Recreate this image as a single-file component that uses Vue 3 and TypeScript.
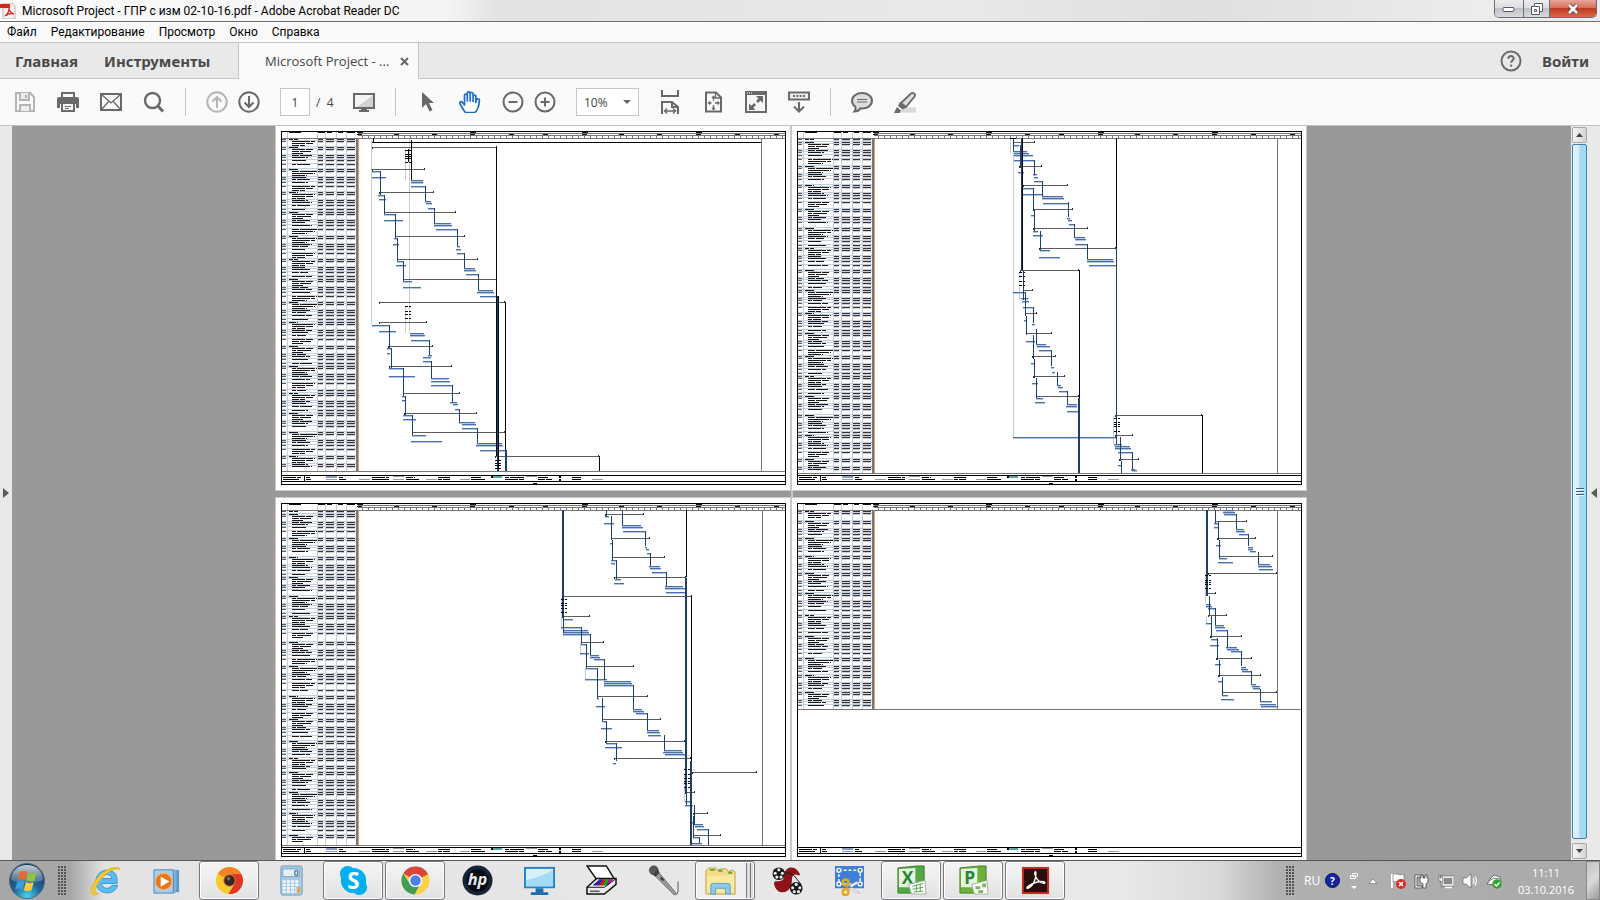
<script setup lang="ts">
import { ref } from 'vue'

type Span = [number, number, number]
type Link = [number, number, number, string?]
interface SheetData {
  scale: number
  left: number
  top: number
  end: number
  summaries: Span[]
  tasks: Span[]
  links: Link[]
  stones: [number, number[]][]
}
interface Layer { color: string; d: string }

const pageNo = ref('1')
const zoomLevel = ref('10%')
const menus = ['Файл', 'Редактирование', 'Просмотр', 'Окно', 'Справка']

// Chart geometry in drawing units: [x1, x2, y] for bars, [x, y1, y2, kind] for links.
const sheets: SheetData[] = [
  {
    scale: 3, left: -6, top: -6, end: 1053,
    summaries: [[305, 680, 81], [305, 465, 147], [328, 492, 218], [343, 558, 276], [374, 584, 348], [380, 623, 418], [400, 680, 478], [328, 706, 548], [327, 470, 608], [353, 488, 679], [358, 545, 738], [398, 570, 821], [403, 622, 880], [426, 706, 938], [675, 988, 1009]],
    tasks: [[305, 331, 153], [305, 348, 173], [424, 458, 180], [424, 460, 186], [424, 466, 199], [325, 343, 225], [326, 348, 237], [466, 484, 245], [468, 487, 251], [474, 491, 264], [343, 376, 284], [343, 400, 302], [491, 544, 310], [491, 545, 316], [499, 560, 328], [372, 381, 354], [370, 386, 374], [560, 569, 380], [558, 572, 387], [560, 583, 400], [380, 400, 425], [379, 407, 437], [583, 614, 445], [583, 617, 451], [587, 623, 464], [400, 427, 484], [398, 452, 503], [623, 669, 510], [620, 673, 516], [631, 683, 529], [305, 358, 616], [326, 378, 635], [421, 462, 640], [421, 465, 646], [424, 476, 661], [352, 362, 686], [352, 360, 700], [474, 487, 706], [460, 482, 712], [460, 484, 725], [358, 400, 746], [356, 434, 770], [484, 536, 776], [482, 539, 783], [484, 545, 796], [397, 405, 829], [397, 405, 840], [541, 562, 848], [548, 564, 854], [554, 568, 867], [400, 427, 886], [400, 437, 899], [568, 614, 906], [575, 617, 912], [577, 622, 926], [427, 468, 945], [424, 516, 965], [620, 697, 970], [618, 699, 976], [631, 706, 990]],
    links: [[304, 60, 615, 'l'], [418, 60, 640, 'l'], [406, 90, 180, 'l'], [406, 560, 640, 'l'], [1474, 54, 1053, 'g'], [310, 54, 66, 'k'], [331, 153, 225], [343, 225, 284], [376, 284, 354], [382, 354, 425], [400, 425, 484], [424, 60, 180, 'k'], [415, 88, 128, 'k'], [466, 199, 245], [491, 264, 310], [560, 328, 380], [583, 400, 445], [623, 464, 510], [683, 529, 1053, 'w'], [679, 81, 1009, 'k'], [706, 548, 990, 'k'], [358, 616, 686], [362, 686, 746], [400, 746, 829], [406, 829, 886], [427, 886, 945], [476, 661, 706], [484, 725, 776], [545, 796, 848], [568, 867, 906], [622, 926, 970], [709, 990, 1053, 'n'], [988, 1009, 1053, 'k']],
    stones: [[406, [90, 103, 109, 115, 127, 558, 573, 582, 594]], [674, [1021, 1030, 1036, 1045]]],
  },
  {
    scale: 2.958, left: -2, top: -6, end: 1059,
    summaries: [[661, 724, 67], [676, 745, 138], [688, 821, 197], [718, 836, 267], [720, 881, 326], [738, 963, 385], [680, 856, 450], [688, 719, 510], [694, 730, 580], [698, 774, 639], [717, 786, 710], [720, 812, 769], [728, 856, 828], [960, 1220, 886], [960, 1014, 946], [974, 1032, 1017]],
    tasks: [[661, 678, 75], [661, 700, 93], [664, 707, 100], [662, 719, 106], [664, 723, 120], [674, 691, 157], [720, 731, 164], [722, 733, 171], [723, 744, 184], [688, 720, 204], [686, 744, 222], [744, 808, 230], [744, 810, 236], [747, 821, 249], [714, 725, 287], [820, 829, 294], [822, 833, 301], [824, 841, 314], [720, 733, 333], [718, 747, 346], [841, 873, 352], [843, 876, 358], [844, 880, 373], [739, 769, 392], [737, 799, 411], [880, 955, 417], [878, 957, 424], [884, 963, 437], [661, 696, 517], [684, 703, 536], [686, 706, 545], [690, 720, 562], [691, 700, 600], [716, 726, 612], [697, 725, 665], [729, 758, 673], [730, 769, 679], [738, 773, 691], [714, 724, 730], [772, 781, 743], [775, 784, 756], [717, 733, 789], [791, 802, 796], [793, 808, 802], [795, 818, 815], [728, 747, 834], [726, 754, 848], [818, 848, 853], [816, 850, 859], [820, 856, 873], [661, 963, 952], [957, 983, 972], [960, 1005, 979], [962, 1008, 986], [970, 1013, 998], [971, 979, 1037], [1010, 1020, 1047], [1012, 1026, 1051]],
    links: [[661, 95, 952, 'l'], [650, 54, 100, 'l'], [676, 458, 540, 'l'], [956, 890, 972, 'l'], [1442, 54, 1059, 'g'], [661, 54, 95], [686, 54, 450, 'w'], [963, 54, 385, 'k'], [963, 385, 972], [856, 450, 835, 'k'], [855, 835, 1059, 'n'], [1220, 886, 1059, 'k'], [679, 75, 145], [723, 120, 165], [720, 205, 272], [744, 185, 230], [821, 248, 293], [841, 314, 352], [880, 373, 417], [723, 272, 333], [739, 333, 392], [688, 450, 540], [696, 517, 590], [720, 563, 610], [699, 590, 645], [729, 628, 672], [720, 645, 718], [773, 692, 740], [723, 718, 775], [791, 757, 795], [729, 775, 835], [818, 815, 853], [976, 953, 1025], [1013, 998, 1048], [980, 1025, 1059]],
    stones: [[676, [458, 470, 483, 496]], [957, [895, 907, 913, 919, 934]], [650, [55]]],
  },
  {
    scale: 2.958, left: -6, top: -8, end: 1066,
    summaries: [[990, 1106, 73], [1008, 1125, 144], [1013, 1168, 203], [1018, 1232, 261], [868, 1247, 320], [868, 948, 380], [920, 988, 457], [935, 1076, 528], [967, 1117, 618], [982, 1158, 688], [992, 1229, 753], [1019, 1246, 806], [1247, 1441, 846], [1229, 1256, 906], [1250, 1297, 970], [1250, 1333, 1035]],
    tasks: [[990, 1002, 80], [987, 1017, 99], [1042, 1098, 105], [1040, 1102, 112], [1045, 1110, 125], [1005, 1013, 160], [1110, 1116, 172], [1112, 1120, 178], [1115, 1125, 190], [1010, 1022, 210], [1010, 1020, 221], [1120, 1153, 230], [1125, 1156, 236], [1130, 1170, 248], [1020, 1038, 268], [1017, 1046, 281], [1168, 1222, 289], [1167, 1228, 295], [1172, 1232, 308], [868, 895, 387], [862, 921, 412], [866, 940, 420], [866, 944, 426], [868, 948, 432], [921, 936, 464], [918, 943, 489], [946, 972, 496], [946, 976, 502], [957, 989, 509], [936, 968, 535], [933, 998, 567], [987, 1068, 573], [987, 1071, 580], [989, 1076, 587], [966, 974, 625], [965, 990, 650], [1075, 1101, 657], [1075, 1105, 664], [1084, 1116, 670], [982, 995, 695], [980, 1013, 714], [1116, 1150, 722], [1114, 1154, 728], [1118, 1156, 735], [994, 1022, 760], [990, 1042, 773], [1164, 1219, 780], [1162, 1221, 787], [1167, 1229, 793], [1016, 1024, 819], [1227, 1245, 935], [1229, 1250, 945], [1242, 1256, 997], [1255, 1281, 1004], [1256, 1285, 1010], [1264, 1297, 1018], [1252, 1271, 1043], [1247, 1278, 1061]],
    links: [[860, 325, 412, 'l'], [918, 463, 489, 'l'], [933, 535, 567, 'l'], [1226, 853, 935, 'l'], [1454, 60, 1066, 'g'], [867, 60, 385, 'n'], [993, 60, 80], [1010, 80, 150], [1042, 60, 105], [1110, 125, 170], [1013, 150, 210], [1125, 190, 230], [1022, 210, 268], [1170, 248, 288], [1232, 60, 262, 'k'], [1230, 266, 910, 'n'], [1246, 320, 815, 'k'], [1245, 815, 1066, 'n'], [868, 385, 430], [921, 412, 463], [948, 432, 496], [936, 463, 535], [989, 509, 572], [968, 535, 625], [1075, 586, 657], [983, 625, 695], [1116, 670, 722], [995, 695, 760], [1164, 736, 780], [1022, 760, 815], [1232, 880, 945], [1255, 945, 1005], [1252, 980, 1045], [1297, 1018, 1066], [1270, 1042, 1060]],
    stones: [[862, [328, 340, 346, 355, 367]], [1225, [838, 853, 865, 873, 880, 892]]],
  },
  {
    scale: 2.958, left: -2, top: -8, end: 658,
    summaries: [[1258, 1351, 93], [1264, 1379, 146], [1268, 1429, 198], [1235, 1442, 249], [1234, 1259, 310], [1236, 1292, 375], [1242, 1336, 440], [1260, 1366, 505], [1267, 1392, 556], [1278, 1442, 608]],
    tasks: [[1282, 1314, 61], [1280, 1316, 67], [1285, 1320, 73], [1255, 1267, 100], [1255, 1266, 112], [1320, 1343, 119], [1320, 1346, 125], [1328, 1356, 132], [1261, 1274, 165], [1356, 1369, 172], [1356, 1371, 178], [1360, 1378, 185], [1270, 1293, 204], [1266, 1310, 217], [1383, 1420, 223], [1383, 1425, 230], [1386, 1428, 237], [1230, 1244, 343], [1232, 1247, 349], [1236, 1258, 355], [1232, 1246, 401], [1258, 1284, 407], [1258, 1288, 413], [1260, 1294, 420], [1244, 1264, 447], [1241, 1270, 465], [1290, 1321, 472], [1292, 1327, 478], [1304, 1335, 485], [1258, 1274, 523], [1335, 1350, 531], [1335, 1356, 537], [1338, 1365, 543], [1265, 1282, 575], [1365, 1377, 583], [1367, 1389, 589], [1370, 1391, 596], [1279, 1296, 615], [1276, 1314, 629], [1391, 1427, 635], [1391, 1437, 642], [1393, 1442, 649]],
    links: [[1228, 257, 340, 'l'], [1231, 380, 401, 'l'], [1442, 60, 658, 'g'], [1234, 60, 318, 'n'], [1258, 60, 98], [1267, 98, 150], [1320, 73, 118], [1270, 150, 205], [1356, 132, 170], [1383, 186, 223], [1238, 318, 375], [1258, 355, 406], [1244, 380, 446], [1294, 420, 472], [1264, 446, 510], [1335, 485, 530], [1270, 510, 563], [1365, 543, 582], [1279, 563, 615], [1391, 597, 635]],
    stones: [[1228, [257, 270, 277, 284, 296]]],
  },
]

function box(x: number, y: number, w: number, h: number): string {
  return `M${x} ${y}h${w}v${h}h${-w}z`
}

// Body text at this zoom is only a run of short dashes.
function words(x: number, y: number, w: number, seed: number): string {
  let d = ''
  let at = x
  let k = seed
  while (at < x + w) {
    const len = Math.min(4 + (k * 7) % 6, x + w - at)
    d += box(at, y, len, 1)
    at += len + (k % 3 === 0 ? 1 : 0)
    k++
  }
  return d
}

function build(s: SheetData): Layer[] {
  const px = (v: number) => Math.round(v / s.scale + s.left)
  const py = (v: number) => Math.floor(v / 3 + s.top)
  const end = py(s.end)
  const start = 13
  let rules = '', ink = '', cells = '', soft = '', numbers = '', head = ''

  const row = (y: number, lines: number, indent: number, seed: number) => {
    if (y >= end) return
    rules += box(6, y - 1, 74, 1)
    numbers += box(6, y, 4, 1)
    for (let i = 0; i < lines && y + i * 2 < end; i++) {
      const w = lines === 1 ? 14 + (seed % 4) * 2 : [25, 23, 15][i % 3] - (seed % 3) * 2
      ink += words(indent, y + i * 2, indent < 15 ? Math.min(w, 9) : w, seed + i)
    }
    cells += box(42, y, 5, 1) + box(50, y, 8, 1) + box(61, y, 7, 1) + box(71, y, 8, 1)
    soft += box(42, y + 1, 5, 1) + box(50, y + 1, 8, 1) + box(61, y + 1, 7, 1) + box(71, y + 1, 8, 1)
  }
  const marks = [start, ...s.summaries.map((v) => py(v[2])), end]
  marks.forEach((y, i) => {
    if (i === marks.length - 1) return
    const gap = marks[i + 1] - y
    row(y, 1, 13, i)
    if (gap > 6) row(y + 2, 3, 16, i + 1)
    if (gap > 10) row(y + 8, 1, 16, i + 2)
    if (gap > 15) row(y + 13, 1, 16, i + 3)
    if (gap > 12) row(y + 10, 1, 16, i + 4)
    if (gap > 19) row(y + 17, gap > 22 ? 3 : 1, 16, i + 5)
    if (gap > 26) row(y + 24, 1, 16, i + 1)
  })

  for (const x of [11, 41, 49, 60, 70]) rules += box(x, 6, 1, end - 6)
  let grey = box(82, 7, 427, 1) + box(82, 9, 427, 1) + box(6, 12, 503, 1) + box(6, end, 503, 1) + box(80, 13, 2, end - 13)
  for (let x = 86; x < 509; x += 6) grey += box(x, 10, 1, 2)
  head += words(13, 6, 12, 2) + box(42, 6, 7, 1) + box(51, 6, 5, 1) + box(62, 6, 5, 1) + box(71, 6, 8, 1)
  const labels = [81, 118, 156, 194, 233, 267, 306, 343, 381, 420, 459, 498]
  labels.forEach((x, i) => { head += box(x, 8, 5, 1) + (i % 3 === 0 ? box(x, 6, 6, 1) : '') })

  let bars = '', barEdge = '', sums = '', sumEdge = '', light = '', navy = '', black = ''
  for (const [a, b, y] of s.tasks) {
    bars += box(px(a), py(y), Math.max(px(b) - px(a), 2), 1)
    barEdge += box(px(a), py(y) + 1, Math.max(px(b) - px(a), 2), 1)
  }
  for (const [a, b, y] of s.summaries) {
    sums += box(px(a), py(y), px(b) - px(a), 1)
    sumEdge += box(px(b) - 1, py(y) - 1, 1, 2) + box(px(a), py(y), 1, 2)
  }
  for (const [x, a, b, kind] of s.links) {
    const top = py(a)
    const h = py(b) - top
    if (kind === 'l') light += box(px(x), top, 1, h)
    else if (kind === 'g') grey += box(px(x), top, 1, h)
    else if (kind === 'k') black += box(px(x), top, 1, h)
    else if (kind === 'w') { black += box(px(x), top, 1, h); navy += box(px(x) - 1, top, 1, h) }
    else if (kind === 'n') navy += box(px(x) - 1, top, 2, h)
    else navy += box(px(x), top, 1, h)
  }
  for (const [x, ys] of s.stones) for (const y of ys) black += box(px(x), py(y), 3, 1) + box(px(x) + 4, py(y), 2, 1)
  if (s === sheets[0]) black += box(px(305), py(67), px(1474) - px(305), 1)

  // Legend under the chart and the outer frame.
  const foot = 349
  let legend = box(6, foot, 503, 1) + box(6, foot + 6, 503, 1) + box(28, foot, 1, 6) + box(257, foot + 8, 4, 1)
  legend += box(5, 5, 1, 354) + box(509, 5, 1, 354) + box(5, 5, 505, 1) + box(5, 358, 505, 1)
  legend += words(7, foot + 2, 18, 2) + words(7, foot + 4, 16, 1)
  const items: [number, number][] = [[30, 5], [63, 4], [96, 17], [130, 9], [162, 12], [195, 10], [229, 19], [262, 10], [296, 9]]
  items.forEach(([x, w], i) => { legend += words(x, foot + 2, w, i) + words(x, foot + 4, w + (i % 2) * 4, i + 2) })
  legend += box(215, foot + 1, 2, 2) + box(283, foot + 1, 2, 2) + box(283, foot + 4, 2, 2)
  const swatch = box(50, foot + 1, 11, 2) + box(50, foot + 4, 11, 1)
  const teal = box(217, foot + 1, 9, 2)
  const dull = box(83, foot + 4, 11, 1) + box(117, foot + 1, 11, 1) + box(117, foot + 4, 11, 1) + box(150, foot + 4, 11, 1) + box(184, foot + 4, 10, 1) + box(250, foot + 1, 11, 1) + box(316, foot + 4, 11, 1)

  return [
    { color: '#c5cedb', d: rules },
    { color: '#5d6166', d: numbers },
    { color: '#cdcfd4', d: soft },
    { color: '#34343a', d: cells },
    { color: '#16161a', d: ink },
    { color: '#c9ccd2', d: light },
    { color: '#777777', d: grey },
    { color: '#dfa070', d: box(82, 13, 1, end - 13) },
    { color: '#111111', d: head },
    { color: '#9a9a9a', d: dull },
    { color: '#8d9cc9', d: swatch },
    { color: '#5aa3a3', d: teal },
    { color: '#b3c5e2', d: barEdge },
    { color: '#4a70ac', d: bars },
    { color: '#5c5c5c', d: sums },
    { color: '#2b2b2b', d: sumEdge },
    { color: '#1c3f70', d: navy },
    { color: '#05070c', d: black },
    { color: '#000000', d: legend },
  ]
}

const pages = sheets.map(build)
</script>

<template>
  <div class="window">
    <header class="titlebar">
      <svg class="app-icon" viewBox="0 0 16 16" aria-hidden="true">
        <path d="M3 0h9l3 3v13H3z" fill="#f4f1ee" stroke="#b9b5b0" />
        <path d="M0 1h10v4H0z" fill="#d9261c" />
        <path d="M5 13c3-2 4-4 4-8 0 3 2 5 5 6-4-1-6 0-9 2z" fill="none" stroke="#d9261c" stroke-width="1.2" />
      </svg>
      <h1>Microsoft Project - ГПР с изм 02-10-16.pdf - Adobe Acrobat Reader DC</h1>
      <div class="win-buttons">
        <button type="button" class="win-min" aria-label="Свернуть">
          <svg width="14" height="8" viewBox="0 0 14 8"><rect x="1" y="2.500" width="11" height="4" rx="1" fill="#fff" stroke="#555a66" /></svg>
        </button>
        <button type="button" class="win-max" aria-label="Восстановить">
          <svg width="14" height="14" viewBox="0 0 14 14"><path d="M4.500 1.500h8v8h-3v3h-8v-8h3z" fill="#fff" stroke="#555a66" /><path d="M4.500 4.500h5v5M4.500 7.500h2v2h-2z" fill="none" stroke="#555a66" /></svg>
        </button>
        <button type="button" class="win-close" aria-label="Закрыть">
          <svg width="14" height="12" viewBox="0 0 14 12"><path d="M3 2l8 8M11 2l-8 8" stroke="#5a4040" stroke-width="4.500" /><path d="M3 2l8 8M11 2l-8 8" stroke="#fff" stroke-width="2.600" /></svg>
        </button>
      </div>
    </header>

    <nav class="menubar">
      <button v-for="m in menus" :key="m" type="button">{{ m }}</button>
    </nav>

    <div class="tabs">
      <div class="tabs-left">
        <button type="button" class="tab-main">Главная</button>
        <button type="button" class="tab-main">Инструменты</button>
      </div>
      <div class="tab-active">
        <span>Microsoft Project - ...</span>
        <button type="button" aria-label="Закрыть вкладку">
          <svg width="9" height="9" viewBox="0 0 9 9"><path d="M1 1l7 7M8 1l-7 7" stroke="#666" stroke-width="2" /></svg>
        </button>
      </div>
      <div class="tabs-right">
        <button type="button" aria-label="Справка">
          <svg width="22" height="22" viewBox="0 0 22 22"><circle cx="11" cy="11" r="9.500" fill="none" stroke="#6b6b6b" stroke-width="2" /><path d="M8.300 8.800c0-3.700 5.600-3.600 5.400-.2-.1 1.900-2.600 2-2.600 4.200" fill="none" stroke="#6b6b6b" stroke-width="2" /><circle cx="11.100" cy="15.600" r="1.200" fill="#6b6b6b" /></svg>
        </button>
        <a href="#" class="signin">Войти</a>
      </div>
    </div>

    <div class="toolbar">
      <div class="tools">
        <button type="button" aria-label="Сохранить">
          <svg viewBox="0 0 22 22" fill="none" stroke="#b4b4b4" stroke-width="2"><path d="M2 2h14l4 4v14H2z" /><path d="M6 2v7h9V2M6 20v-6h10v6" fill="#ececec" /><path d="M12 4v3" /></svg>
        </button>
        <button type="button" aria-label="Печать">
          <svg viewBox="0 0 22 22"><path d="M0 8q0-2 2-2h18q2 0 2 2v9h-3v-4H3v4H0z" fill="#696969" /><path d="M5 6V2h12v4M5 13v7h12v-7" fill="none" stroke="#696969" stroke-width="2" /><path d="M8 15.500h6M8 17.500h4" stroke="#696969" /></svg>
        </button>
        <button type="button" aria-label="Отправить по почте">
          <svg viewBox="0 0 22 22" fill="none" stroke="#696969"><path d="M1 3h20v16H1z" stroke-width="2" /><path d="M2 4l9 8 9-8M2 18l7-8M20 18l-7-8" stroke-width="1.300" /></svg>
        </button>
        <button type="button" aria-label="Найти">
          <svg viewBox="0 0 22 22" fill="none" stroke="#696969"><circle cx="9.500" cy="9.500" r="7.500" stroke-width="2.400" /><path d="M15 15l5 5.500" stroke-width="3" /></svg>
        </button>
      </div>
      <i class="sep"></i>
      <div class="tools tight">
        <button type="button" aria-label="Предыдущая страница">
          <svg viewBox="0 0 22 22" fill="none" stroke="#b4b4b4" stroke-width="2"><circle cx="11" cy="11" r="9.700" /><path d="M11 17V6M6.500 10.500L11 6l4.500 4.500" /></svg>
        </button>
        <button type="button" aria-label="Следующая страница">
          <svg viewBox="0 0 22 22" fill="none" stroke="#696969" stroke-width="2"><circle cx="11" cy="11" r="9.700" /><path d="M11 5v11M6.500 11.500L11 16l4.500-4.500" /></svg>
        </button>
      </div>
      <label class="page-no">
        <input v-model="pageNo" type="text" aria-label="Номер страницы" />
        <span>/&nbsp; 4</span>
      </label>
      <div class="tools">
        <button type="button" aria-label="Режим чтения">
          <svg viewBox="0 0 22 22"><path d="M1 3h20v14H1z" fill="#f4f4f4" stroke="#696969" stroke-width="2" /><path d="M20 4v12H4z" fill="#d2d2d2" /><path d="M8 17h6v2h2v2H6v-2h2z" fill="#696969" /></svg>
        </button>
      </div>
      <i class="sep"></i>
      <div class="tools">
        <button type="button" aria-label="Выделение">
          <svg viewBox="0 0 22 22"><path d="M6 1v16l4-4 3.500 7.500 3-1.400L13 12h5z" fill="#696969" /></svg>
        </button>
        <button type="button" aria-label="Рука">
          <svg viewBox="0 0 22 22" fill="#fff" stroke="#1b6fc9" stroke-width="1.700" stroke-linejoin="round" stroke-linecap="round"><path d="M6.500 21.500C4 19 2.500 15.500.9 12.500c-.6-1.800 1.500-2.500 2.600-1l2 2.500V4.600c0-2 2.800-2 2.800 0V10 2.300c0-2 2.900-2 2.900 0V10 3c0-2 2.900-2 2.900 0v7.500-5c0-2 2.800-2 2.800 0v6l.3-2.500c.4-1.900 3.300-1.400 3.200.5-.4 5-1.200 9.500-4.400 12z" /></svg>
        </button>
      </div>
      <div class="tools tight pulled">
        <button type="button" aria-label="Уменьшить">
          <svg viewBox="0 0 22 22" fill="none" stroke="#696969" stroke-width="2"><circle cx="11" cy="11" r="9.500" /><path d="M6.500 11h9" /></svg>
        </button>
        <button type="button" aria-label="Увеличить">
          <svg viewBox="0 0 22 22" fill="none" stroke="#696969" stroke-width="2"><circle cx="11" cy="11" r="9.500" /><path d="M6.500 11h9M11 6.500v9" /></svg>
        </button>
      </div>
      <div class="zoom">
        <select v-model="zoomLevel" aria-label="Масштаб">
          <option>10%</option>
          <option>25%</option>
          <option>50%</option>
          <option>100%</option>
        </select>
      </div>
      <div class="tools">
        <button type="button" aria-label="По ширине">
          <svg class="tall" viewBox="0 0 22 24" fill="none" stroke="#696969" stroke-width="2"><path d="M3 0v6h16V0M3 24V12h10l6 5v7M13 12v5h6" /><path d="M6 21h10M8 18.500L5.500 21 8 23.500M14 18.500l2.500 2.500-2.500 2.500" stroke-width="1.400" /></svg>
        </button>
        <button type="button" aria-label="Страница целиком">
          <svg viewBox="0 0 22 22" fill="none" stroke="#696969"><path d="M4 1.500h10l5 5v14H4z" stroke-width="2" /><path d="M13.500 2v5H19" stroke-width="1.400" /><path d="M6.500 12h3M13 12h4M11.500 5.500v4M11.500 14v4.500M8 10.500L6.500 12 8 13.500M15.500 10.500L17 12l-1.500 1.500M10 7l1.500-1.500L13 7M10 17l1.500 1.500L13 17" stroke-width="1.300" /></svg>
        </button>
        <button type="button" aria-label="Во весь экран">
          <svg viewBox="0 0 22 22"><path d="M0 0h22v22H0z" fill="#696969" /><path d="M2 4h18v16H2z" fill="#f6f6f6" /><path d="M11 5h7v7l-2.500-2.500L13 12l-2-2 2.500-2.500zM4 12.500l2.300 2.300L9 12l2 2-2.700 2.700L10.500 19H4z" fill="#696969" /><path d="M2 2h1M4 2h1M6 2h1" stroke="#fff" /></svg>
        </button>
        <button type="button" aria-label="Прокрутка">
          <svg viewBox="0 0 22 22" fill="none" stroke="#696969" stroke-width="2"><path d="M1 1.500h20v7H1z" fill="#eee" /><path d="M5 5h12" stroke-dasharray="2 1.300" /><path d="M11 11v9M6 15.500l5 5 5-5" /></svg>
        </button>
      </div>
      <i class="sep"></i>
      <div class="tools">
        <button type="button" aria-label="Комментарий">
          <svg viewBox="0 0 22 22"><path d="M11 2c5.500 0 10 3.300 10 7.800s-4.500 7.700-10 7.700l-1.500-.1C8 19.500 5.500 20.500 3.500 20.500c1-1.200 1.300-3 1-4.600C2.500 14.500 1 12.300 1 9.800 1 5.300 5.500 2 11 2z" fill="#dedede" stroke="#696969" stroke-width="2" /><path d="M6 8.500h10M6 11h10" stroke="#696969" stroke-width="1.200" /></svg>
        </button>
        <button type="button" aria-label="Выделить текст">
          <svg viewBox="0 0 22 22"><path d="M9 16.500h13v5H6z" fill="#d8d8d8" /><path d="M7 12L17 2.500c2-1.700 5 .6 3.500 3L12 16z" fill="#dedede" stroke="#696969" stroke-width="1.800" /><path d="M6 11l6.500 5.500-4 2L4 15zM3 16l4 3.500-1.500 2.500H0z" fill="#696969" /></svg>
        </button>
      </div>
    </div>

    <main class="workspace">
      <button type="button" class="rail rail-left" aria-label="Показать панель навигации">
        <svg width="6" height="10" viewBox="0 0 6 10"><path d="M0 0l6 5-6 5z" fill="#5c5c5c" /></svg>
      </button>
      <div class="viewer">
        <div class="pages">
          <svg v-for="(layers, n) in pages" :key="n" class="page" viewBox="0 0 514 364" role="img" :aria-label="`Страница ${n + 1}`" shape-rendering="crispEdges">
            <path v-for="layer in layers" :key="layer.color" :d="layer.d" :fill="layer.color" />
          </svg>
        </div>
      </div>
      <div class="scrollbar">
        <button type="button" aria-label="Вверх"><svg width="7" height="4" viewBox="0 0 7 4"><path d="M0 4l3.500-4L7 4z" fill="#444" /></svg></button>
        <div class="thumb"><i></i><i></i><i></i></div>
        <button type="button" aria-label="Вниз"><svg width="7" height="4" viewBox="0 0 7 4"><path d="M0 0l3.500 4L7 0z" fill="#444" /></svg></button>
      </div>
      <button type="button" class="rail rail-right" aria-label="Показать панель инструментов">
        <svg width="6" height="10" viewBox="0 0 6 10"><path d="M6 0L0 5l6 5z" fill="#5c5c5c" /></svg>
      </button>
    </main>

    <footer class="taskbar">
      <button type="button" class="orb" aria-label="Пуск">
        <svg width="36" height="36" viewBox="0 0 36 36">
          <defs>
            <radialGradient id="orb" cx=".5" cy=".95" r=".9"><stop offset="0" stop-color="#4fd4f5" /><stop offset=".45" stop-color="#1f6595" /><stop offset="1" stop-color="#16344f" /></radialGradient>
            <linearGradient id="gloss" x2="0" y2="1"><stop offset="0" stop-color="#fff" stop-opacity=".75" /><stop offset="1" stop-color="#fff" stop-opacity=".15" /></linearGradient>
          </defs>
          <circle cx="18" cy="18" r="17.500" fill="url(#orb)" stroke="#4f6b80" />
          <path d="M2 17C2 8 9 2 18 2s16 6 16 15c-9 4-23 4-32 0z" fill="url(#gloss)" />
          <path d="M11 9c2.200-1.500 4.800-1.500 7.300 0l-2.200 8c-2.300-1.400-4.800-1.400-7.300 0z" fill="#ea6a2c" />
          <path d="M19.300 9.500c2.500 1.400 5.200 1.400 8.200.2l-2.200 8c-2.700 1.200-5.500 1-8-.4z" fill="#8fc441" />
          <path d="M8.300 18.500c2.500-1.400 5-1.400 7.400 0l-2.200 8c-2.400-1.300-4.900-1.300-7.300 0z" fill="#3f9ade" />
          <path d="M17 19c2.400 1.400 5 1.500 7.700.3l-2.200 8c-2.600 1.200-5.200 1-7.600-.4z" fill="#fccb3a" />
        </svg>
      </button>
      <i class="dots"></i>
      <div class="apps">
        <button type="button" aria-label="Internet Explorer">
          <svg viewBox="0 0 32 32"><path d="M28 19H12c.4 5.500 8 7 10.500 2h6C26 32 7 32 6 17.500 6 2 28 1 28 15.500zM12 14h10.500c-.5-5.500-9.500-5.500-10.500 0z" fill="#59bdf0" stroke="#2a86cc" stroke-width=".8" /><path d="M31 5C30-1 14 4 7 14 1 22-1 30 4 31c1.500.2 3-.6 5-1.800-4 1-5-2-2.500-7C11 12 25 1 31 5z" fill="#f5c631" stroke="#d59d15" stroke-width=".5" /></svg>
        </button>
        <button type="button" aria-label="Проигрыватель">
          <svg viewBox="0 0 32 32"><path d="M10 5h18v23H10z" fill="#5d9cc4" /><path d="M6 5h19v24H6z" fill="#7fb4d6" /><path d="M2 5h20v24H2z" fill="#a9cde4" stroke="#4d88b3" /><circle cx="12" cy="17" r="8.500" fill="#ee7414" stroke="#f8b57b" /><path d="M9 12l9 5-9 5.500z" fill="#fff" /></svg>
        </button>
        <button type="button" class="open" aria-label="Браузер">
          <svg viewBox="0 0 32 32"><circle cx="16" cy="16" r="14" fill="#f8ca2d" /><path d="M16 16L3.900 9A14 14 0 0 1 28.100 9z" fill="#f28427" /><path d="M16 16V9.500h12.300A14 14 0 0 1 15 30l6.500-11z" fill="#df3527" /><circle cx="16" cy="16" r="6" fill="#3a2722" stroke="#e88430" /><circle cx="15" cy="14" r="2" fill="#75635c" /></svg>
        </button>
        <button type="button" aria-label="Калькулятор">
          <svg viewBox="0 0 32 32"><rect x="5" y="1" width="22" height="30" rx="2" fill="#a9cce6" stroke="#6f9fc4" /><path d="M7 4h17v8H7z" fill="#e4f0f8" stroke="#7ca2bf" /><path d="M19.500 6h3v4.500h-3z" fill="none" stroke="#2f5478" /><path d="M7 17h17M7 20.500h17M7 24h14M7 27.500h14" stroke="#f7fbff" stroke-width="2.400" stroke-dasharray="3 1.300" /><path d="M22 23h3v6h-3z" fill="#e8a33f" /></svg>
        </button>
        <button type="button" class="open" aria-label="Skype">
          <svg viewBox="0 0 32 32"><circle cx="10" cy="9" r="8" fill="#00aff0" /><circle cx="22" cy="23" r="8" fill="#00aff0" /><circle cx="16" cy="16" r="13" fill="#00aff0" /><text x="16" y="25" text-anchor="middle" class="glyph" font-size="23" fill="#fff">S</text></svg>
        </button>
        <button type="button" class="open" aria-label="Chrome">
          <svg viewBox="0 0 32 32"><circle cx="16" cy="16" r="14.500" fill="#fbd14a" /><path d="M16 16L3.400 8.800A14.500 14.500 0 0 1 28.900 9.500z" fill="#d9473a" /><path d="M3.400 8.800A14.500 14.500 0 0 0 15 30.500l6-11.500-5-3-5.500 4z" fill="#3e9c57" /><circle cx="16" cy="16" r="6.800" fill="#fff" /><circle cx="16" cy="16" r="5.400" fill="#4a80ec" /></svg>
        </button>
        <button type="button" aria-label="HP">
          <svg viewBox="0 0 32 32"><circle cx="16" cy="16" r="15.500" fill="#152536" /><circle cx="16" cy="16" r="11.500" fill="#070c12" /><text x="16" y="21" text-anchor="middle" class="glyph" font-size="17" font-style="italic" fill="#e5eaee">hp</text></svg>
        </button>
        <button type="button" aria-label="Компьютер">
          <svg viewBox="0 0 32 32"><path d="M0 2h32v22H0z" fill="#2583c4" /><path d="M2 4h28v18H2z" fill="#d4f1fc" /><path d="M2 16C12 14 22 10 30 5v17H2z" fill="#a2dcf6" /><path d="M12 24h8v4h5v3H7v-3h5z" fill="#1c6daa" /></svg>
        </button>
        <button type="button" aria-label="Сканер">
          <svg viewBox="0 0 32 32"><path d="M1 1h20l8 13-18 1z" fill="#fff" stroke="#111" stroke-width="1.500" /><path d="M1 23l10-9h20v6L19 30H1z" fill="#e9e9e9" stroke="#111" stroke-width="1.500" /><path d="M7 21l7-6h14l-7 6z" fill="#111" /><path d="M8 21l6-6h3l-4 6z" fill="#22c" /><path d="M13 21l4-6h3l-3 6z" fill="#d11" /><path d="M17 21l3-6h4l-3 6z" fill="#1a1" /><path d="M21 21l3-6h4l-5 6z" fill="#b1b" /><path d="M1 23h18l12-9M4 27h10" fill="none" stroke="#111" /></svg>
        </button>
        <button type="button" aria-label="Микрофон">
          <svg viewBox="0 0 32 32"><path d="M5 9l4-4 20 24-2 2z" fill="#97999c" stroke="#606265" stroke-width=".7" /><circle cx="6" cy="5.500" r="5" fill="#55575b" /><path d="M5 10l5-5 2 3-4 4z" fill="#3f4144" /><path d="M13 13l3 3" stroke="#333" stroke-width="2" /><path d="M31 17v10q0 3-3 4" fill="none" stroke="#555" /></svg>
        </button>
        <button type="button" class="open stack" aria-label="Проводник">
          <svg viewBox="0 0 32 32"><path d="M1 6l3-3h7l2 3 2-2h7l2 3 4-2 3 2v23H1z" fill="#f4dc86" stroke="#c69f40" /><path d="M5 5h5M14 6h4M24 8h4" stroke="#59a644" stroke-width="2" /><path d="M2 12l28-2v19H2z" fill="#fae9a3" /><path d="M6 30V21q0-2 2-2h16q2 0 2 2v9h-5v-6H11v6z" fill="#8cc9ea" stroke="#5c9fc8" /></svg>
        </button>
        <button type="button" aria-label="Видеоредактор">
          <svg viewBox="0 0 32 32"><path d="M17 3c-7 4-2 10-7 13-4 2-7-1-8 3 2 11 13 12 17 4 3-6 0-11 4-13 3-1 4 2 6 0-2-5-6-9-12-7z" fill="#8d1318" /><circle cx="7" cy="9" r="6.500" fill="#17181a" /><circle cx="25" cy="24" r="6.500" fill="#17181a" /><g fill="#ececec"><circle cx="7" cy="5" r="1.600" /><circle cx="3.300" cy="8.500" r="1.600" /><circle cx="10.700" cy="8.500" r="1.600" /><circle cx="5" cy="12.500" r="1.600" /><circle cx="9.300" cy="12.500" r="1.600" /><circle cx="25" cy="20" r="1.600" /><circle cx="21.300" cy="23.500" r="1.600" /><circle cx="28.700" cy="23.500" r="1.600" /><circle cx="23" cy="27.500" r="1.600" /><circle cx="27.300" cy="27.500" r="1.600" /></g><path d="M13 7l9 3 8 10" fill="none" stroke="#17181a" /></svg>
        </button>
        <button type="button" aria-label="Ножницы">
          <svg viewBox="0 0 32 32"><path d="M1 1h30v23H1z" fill="#3f7ed8" /><path d="M5 5.500h22v14H5z" fill="none" stroke="#fff" stroke-width="1.500" stroke-dasharray="3 2" /><g fill="#3f7ed8" stroke="#fff" stroke-width="1.400"><circle cx="5" cy="5.500" r="2" /><circle cx="27" cy="5.500" r="2" /><circle cx="5" cy="19.500" r="2" /><circle cx="27" cy="19.500" r="2" /></g><path d="M15 21l12 8h-3l-11-6zM15 25l11-7-3-1-10 6z" fill="#f1f3f5" stroke="#999" stroke-width=".5" /><circle cx="12" cy="18" r="3" fill="none" stroke="#e3aa22" stroke-width="2.500" /><circle cx="12" cy="28" r="3" fill="none" stroke="#e3aa22" stroke-width="2.500" /></svg>
        </button>
        <button type="button" class="open" aria-label="Excel">
          <svg viewBox="0 0 32 32"><path d="M2 3l20-2h7v28H2z" fill="#54a843" stroke="#377b2c" /><path d="M3 4l17-1v20H3z" fill="#e5f3df" /><text x="12" y="20" text-anchor="middle" class="glyph" font-size="18" fill="#268234">X</text><path d="M13 20l17-4 1 14H16z" fill="#fff" stroke="#9cb5a0" /><path d="M17 22l11-3M17 25l11-2M18 28l10-1M21 20v8M25 19v9" stroke="#5ba257" /></svg>
        </button>
        <button type="button" class="open" aria-label="Microsoft Project">
          <svg viewBox="0 0 32 32"><path d="M2 3l20-2h7v28H2z" fill="#6bb13b" stroke="#438229" /><path d="M3 4l17-1v20H3z" fill="#e5f3df" /><text x="12" y="20" text-anchor="middle" class="glyph" font-size="18" fill="#2b8532">P</text><path d="M14 20l16-4 1 14H17z" fill="#fff" stroke="#9cb5a0" /><path d="M18 22h5v3h-5zM25 19h4v4h-4zM21 26h5v3h-5z" fill="#7ab55c" /></svg>
        </button>
        <button type="button" class="open" aria-label="Acrobat Reader">
          <svg viewBox="0 0 32 32"><path d="M2 2h28v28H2z" fill="#d02a1e" /><path d="M4 4h24v24H4z" fill="#2a0d0b" /><path d="M8 24c5-2 9-9 8.500-16-.2-2-2-1-1 2 1.500 5 5 8 9 9 2 .3 1.500-2-1-2-5 0-10 1.500-14.500 4.500-2 1.500-2.500 2.800-1 2.500z" fill="none" stroke="#fff" stroke-width="1.400" /></svg>
        </button>
      </div>
      <div class="tray">
        <i class="dots"></i>
        <span class="lang">RU</span>
        <svg class="help" width="15" height="15" viewBox="0 0 15 15"><circle cx="7.500" cy="7.500" r="7" fill="#1423a0" stroke="#0b1254" /><text x="7.500" y="11.500" text-anchor="middle" class="glyph" font-size="10" fill="#fff">?</text></svg>
        <svg class="lang-tools" width="10" height="18" viewBox="0 0 10 18"><path d="M3.500 1.500h5v3h-5zM1.500 3.500h5v3h-5z" fill="#aaa" stroke="#fff" /><path d="M2 14h6l-3 3z" fill="#fff" /></svg>
        <svg class="more" width="10" height="6" viewBox="0 0 10 6"><path d="M1 5.500L5 1l4 4.500z" fill="#fff" stroke="#666" stroke-width=".6" /></svg>
        <div class="tray-icons">
          <svg viewBox="0 0 16 16"><path d="M2 1v14" stroke="#fff" stroke-width="2" /><path d="M3 1c4-1 6 2 11 0v8C9 11 7 7 3 9z" fill="#fff" stroke="#666" stroke-width=".6" /><circle cx="11" cy="11" r="5" fill="#d92c22" /><path d="M9 9l4 4M13 9l-4 4" stroke="#fff" stroke-width="1.500" /></svg>
          <svg viewBox="0 0 16 16" stroke="#444" stroke-width=".8"><path d="M1 2h8v2H3v9h5v2H1z" fill="#fff" /><path d="M6 5h1V2h2v3h2V2h2v3h1v4l-2 2v4H9v-4L6 9z" fill="#fff" /></svg>
          <svg viewBox="0 0 16 16"><path d="M5 4h10v8H5z" fill="#777" stroke="#444" stroke-width="2.600" /><path d="M5 4h10v8H5z" fill="#8a8a8a" stroke="#fff" stroke-width="1.400" /><path d="M7 14.500h7" stroke="#fff" stroke-width="1.500" /><path d="M1 2h1v3h1V2h1v3h1v3H4v6H3V8H1z" fill="#fff" stroke="#444" stroke-width=".5" /></svg>
          <svg viewBox="0 0 16 16"><path d="M1 5h3l5-4v14l-5-4H1z" fill="#fff" stroke="#555" stroke-width=".6" /><path d="M11 5q2 3 0 6M13 3.500q3 4.500 0 9" fill="none" stroke="#fff" stroke-width="1.200" /></svg>
          <svg viewBox="0 0 16 16"><path d="M1 11l3-5 4-4 6 2 1 4-6 4z" fill="#f6f6f6" stroke="#555" stroke-width=".8" /><path d="M3 8l5-3 6 1" fill="none" stroke="#666" stroke-width=".8" /><circle cx="11" cy="11" r="4.700" fill="#2ba32d" /><path d="M8.500 11l2 2 3-3.500" fill="none" stroke="#fff" stroke-width="1.500" /></svg>
        </div>
        <div class="clock"><time>11:11</time><time>03.10.2016</time></div>
        <button type="button" class="desktop" aria-label="Свернуть все окна"></button>
      </div>
    </footer>
  </div>
</template>

<style>
body { margin: 0; overflow: hidden; }
</style>

<style scoped>
.window {
  height: 100vh;
  display: flex;
  flex-direction: column;
  font-family: "Open Sans", "Noto Sans", sans-serif;
  color: #111;
  background: #fafafa;
}
button { border: 0; padding: 0; margin: 0; background: none; font: inherit; color: inherit; display: flex; align-items: center; justify-content: center; }
svg { flex: none; display: block; }
.glyph { font-family: "Open Sans", sans-serif; font-weight: 700; }

.titlebar { flex: none; height: 21px; display: flex; align-items: center; background: linear-gradient(90deg, #fafafa 0, #f4f4f4 28%, #e3e3e3 31%, #e9e9e9 60%, #dfdfdf 75%, #ececec 92%); border-bottom: 1px solid #6e6e6e; }
.app-icon { width: 16px; height: 16px; }
.titlebar h1 { flex: 1; margin: 0 0 0 6px; font-family: Roboto, "Open Sans", sans-serif; font-size: 12px; line-height: 20px; font-weight: 400; white-space: nowrap; color: #000; }
.win-buttons { display: flex; align-self: flex-start; height: 18px; margin-right: 3px; border: 1px solid #6a6d75; border-top: 0; border-radius: 0 0 5px 5px; overflow: hidden; box-sizing: border-box; }
.win-buttons button { height: 17px; background: linear-gradient(#ededed 0, #dcdde0 45%, #bfc1c6 50%, #d8dadd 100%); border-right: 1px solid #6a6d75; box-sizing: border-box; }
.win-min { width: 29px; }
.win-max { width: 26px; }
.win-buttons .win-close { width: 46px; border-right: 0; background: linear-gradient(#e8a797 0, #d5705d 45%, #c23a22 50%, #d9674b 100%); }

.menubar { flex: none; height: 20px; display: flex; align-items: center; gap: 14px; padding-left: 7px; font-family: Roboto, "Open Sans", sans-serif; font-size: 12px; line-height: 20px; color: #000; border-bottom: 1px solid #c6c6c6; background: #fafafa; }

.tabs { flex: none; height: 36px; display: flex; background: #e9e9e9; }
.tabs-left { width: 239px; box-sizing: border-box; padding-left: 15px; display: flex; gap: 26px; border-bottom: 1px solid #c6c6c6; border-right: 1px solid #c6c6c6; }
.tab-main, .signin { font-family: "Noto Sans", sans-serif; font-size: 15px; font-weight: 700; color: #4a4a4a; }
.tab-active { width: 180px; box-sizing: border-box; padding: 0 9px 0 26px; display: flex; align-items: center; justify-content: space-between; background: #fafafa; font-size: 13px; color: #444; white-space: nowrap; border-right: 1px solid #c6c6c6; }
.tabs-right { flex: 1; display: flex; align-items: center; justify-content: flex-end; gap: 20px; padding-right: 11px; border-bottom: 1px solid #c6c6c6; }
.signin { text-decoration: none; }

.toolbar { flex: none; height: 46px; display: flex; align-items: center; gap: 20px; padding-left: 14px; background: #fafafa; border-bottom: 1px solid #c0c0c0; }
.tools { display: flex; gap: 21px; }
.tight { gap: 10px; }
.pulled { margin-left: 1px; }
.tools button { width: 22px; height: 24px; }
.tools svg { width: 22px; height: 22px; }
.tools .tall { height: 24px; }
.sep { width: 1px; height: 28px; background: #c6c6c6; }
.page-no { display: flex; align-items: center; gap: 6px; font-size: 12px; color: #444; }
.page-no input { width: 30px; height: 28px; box-sizing: border-box; padding: 0; border: 1px solid #c6c6c6; background: #fff; text-align: center; font: inherit; color: inherit; }
.page-no span { width: 17px; white-space: nowrap; }
.zoom { position: relative; width: 63px; height: 28px; }
.zoom::after { content: ""; position: absolute; right: 8px; top: 12px; border: 4px solid transparent; border-top-color: #666; border-bottom: 0; }
.zoom select { appearance: none; width: 100%; height: 100%; box-sizing: border-box; padding: 0 0 0 7px; border: 1px solid #c6c6c6; border-radius: 0; background: #fff; font: 12px "Open Sans", sans-serif; color: #444; }

.workspace { flex: 1; min-height: 0; display: flex; background: #999; }
.rail { width: 12px; background: #e9e9e9; }
.viewer { flex: 1; min-width: 0; overflow: hidden; display: flex; justify-content: center; align-items: flex-start; }
.pages { display: grid; grid-template-columns: auto auto; column-gap: 2px; row-gap: 8px; padding-right: 1px; background: linear-gradient(#c8c8c8, #c8c8c8) center / 2px 100% no-repeat; }
.page { width: 514px; height: 364px; background: #fff; box-shadow: 0 0 0 1px #c8c8c8; }
.scrollbar { width: 17px; box-sizing: border-box; display: flex; flex-direction: column; gap: 1px; padding: 1px; background: #eaeaea; }
.scrollbar button { flex: none; height: 16px; border: 1px solid #a6a6a6; border-radius: 2px; background: linear-gradient(90deg, #f5f5f5, #d4d4d4); }
.thumb { flex: 1; display: flex; flex-direction: column; align-items: center; justify-content: center; gap: 1px; margin-bottom: 3px; border: 1px solid #3c7fb1; border-radius: 2px; background: linear-gradient(90deg, #e3f4fc 0, #d0edfb 45%, #a4d8f3 55%, #a9dbf5 100%); }
.thumb i { width: 8px; height: 1px; background: #33658a; border-bottom: 1px solid #eef9ff; }

.taskbar { flex: none; height: 40px; box-sizing: border-box; display: flex; border-top: 1px solid #55585c; background: linear-gradient(90deg, #a8a8a8 0, #a6a6a6 70px, #e4e4e4 105px, #e9e9e9 70%, #dadada 76%, #b0b0b0 80%, #aaaaaa 100%); }
.orb { width: 36px; margin-left: 9px; }
.dots { align-self: center; width: 8px; height: 30px; background-image: radial-gradient(circle at 1px 1px, #555 1px, transparent 1px); background-size: 3px 3px; }
.taskbar > .dots { margin-left: 13px; }
.apps { display: flex; gap: 2px; margin-left: 9px; }
.apps button { width: 60px; height: 39px; box-sizing: border-box; border: 1px solid transparent; }
.apps svg { width: 31px; height: 31px; }
.apps .open { border-color: #77797c; border-radius: 3px; background: linear-gradient(#f5f5f5, #e2e2e2); box-shadow: inset 0 0 0 1px #fff; }
.apps .stack { justify-content: flex-start; padding-left: 9px; background: linear-gradient(90deg, #eee 50px, #77797c 50px, #77797c 51px, #ddd 51px, #ddd 54px, #77797c 54px, #77797c 55px, #ddd 55px); }
.tray { margin-left: auto; display: flex; align-items: center; color: #fff; }
.lang { margin-left: 10px; width: 16px; font-size: 12px; line-height: 16px; }
.help { margin-left: 5px; }
.lang-tools { margin-left: 9px; }
.more { margin-left: 9px; }
.tray-icons { display: flex; gap: 8px; margin-left: 12px; }
.tray-icons svg { width: 16px; height: 16px; }
.clock { width: 80px; padding-left: 4px; display: flex; flex-direction: column; text-align: center; font-size: 11px; line-height: 17px; }
.desktop { align-self: stretch; width: 14px; border: 1px solid #888; background: linear-gradient(135deg, #c2c2c2, #dadada 50%, #999); }
</style>
